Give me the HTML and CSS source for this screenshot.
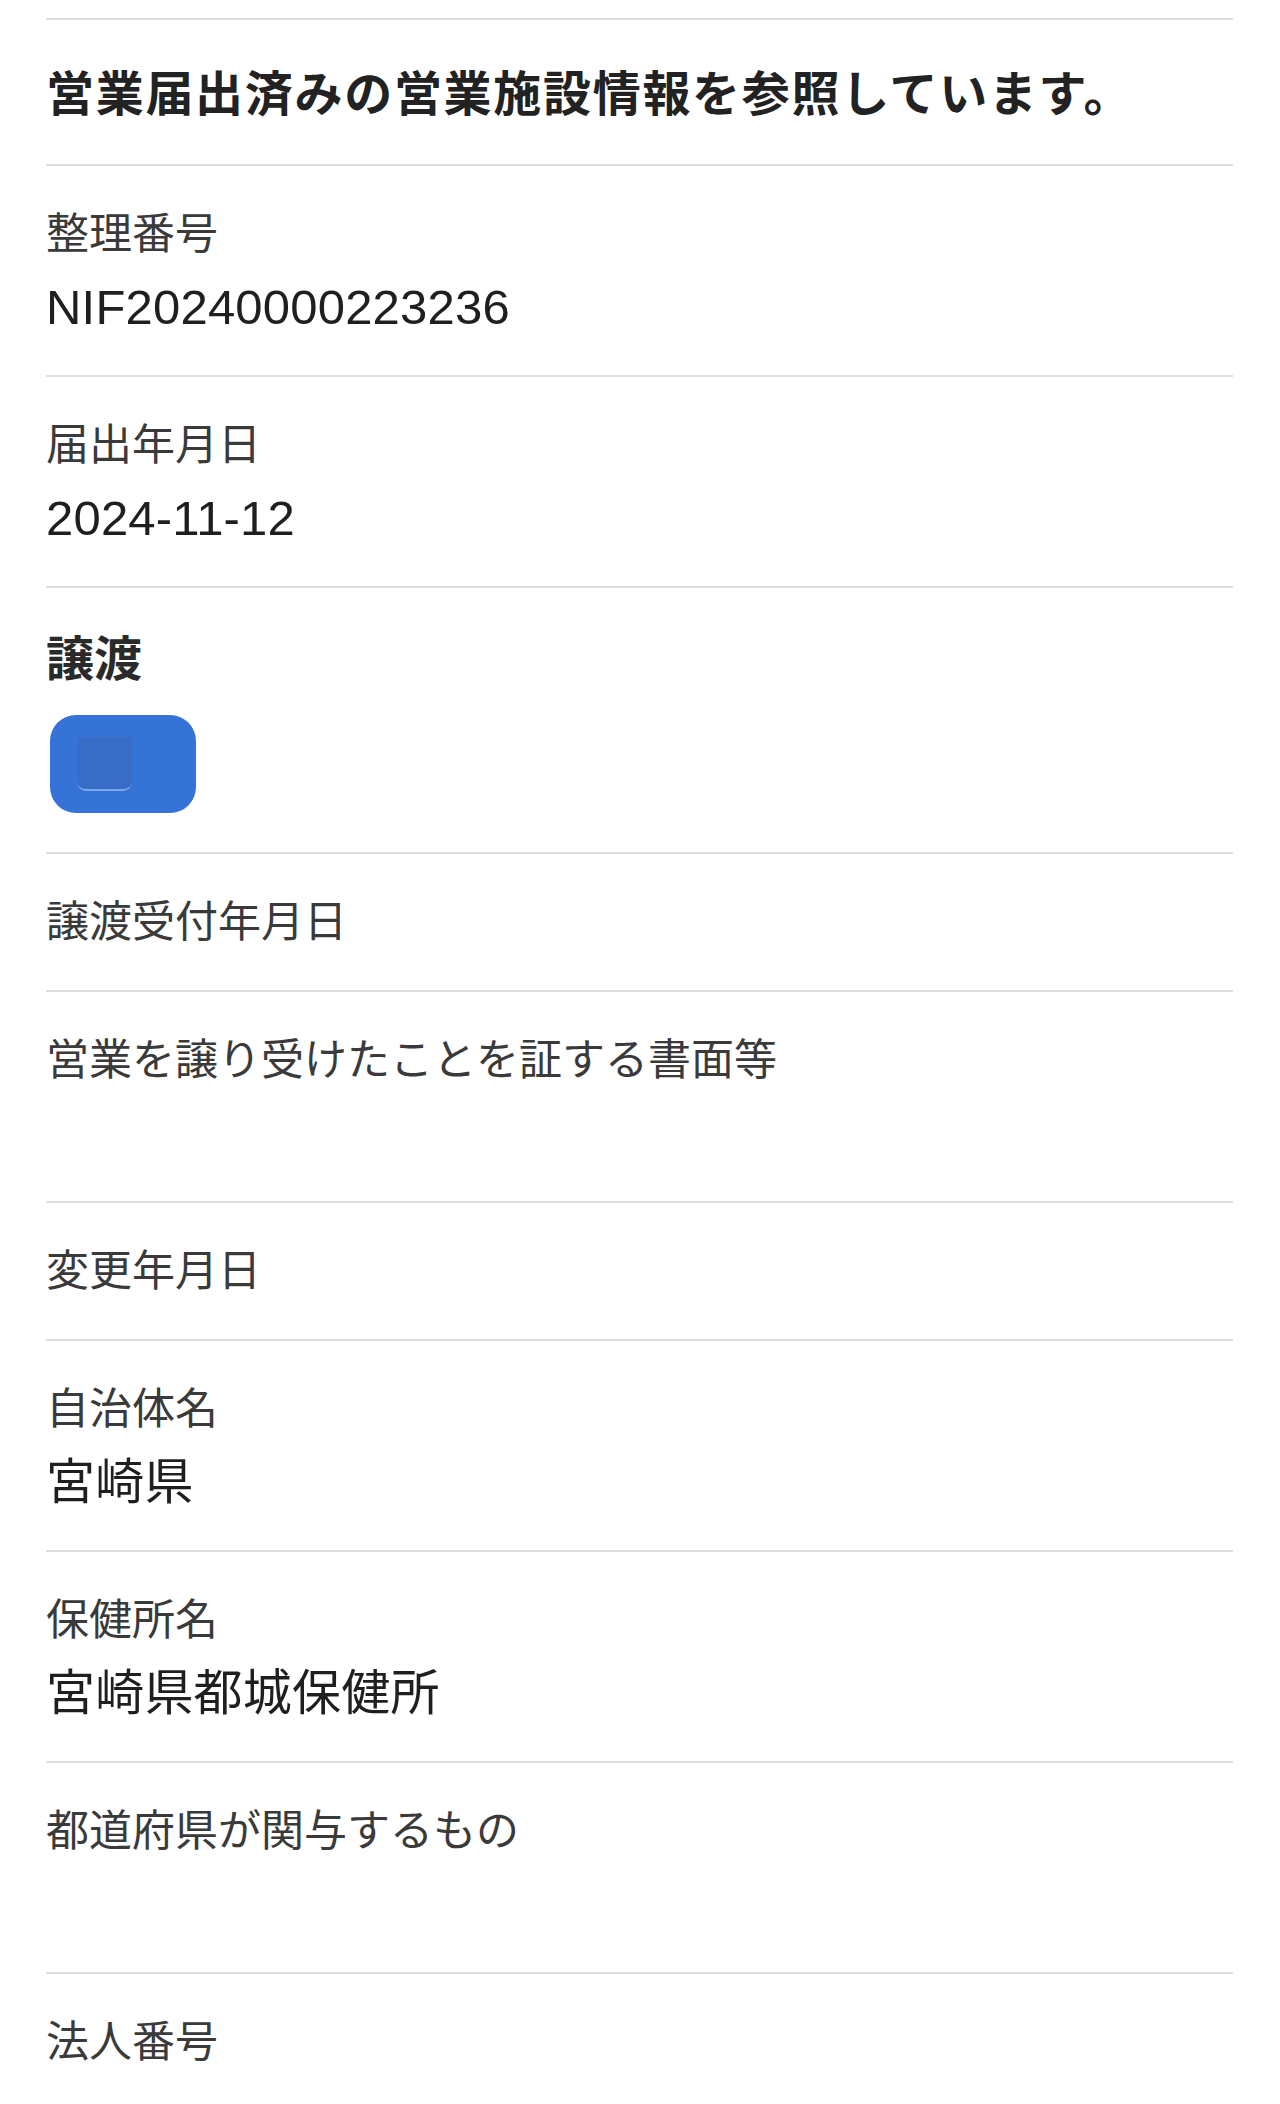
FILE: index.html
```html
<!DOCTYPE html>
<html lang="ja">
<head>
  <meta charset="utf-8">
  <title>営業施設情報</title>
  <link rel="stylesheet" href="styles.css">
</head>
<body>
  <div class="sheet">
    <div class="row row-title">
      <h1>営業届出済みの営業施設情報を参照しています。</h1>
    </div>

    <div class="row">
      <div class="label">整理番号</div>
      <div class="value">NIF20240000223236</div>
    </div>

    <div class="row">
      <div class="label">届出年月日</div>
      <div class="value">2024-11-12</div>
    </div>

    <div class="row row-transfer">
      <h2>譲渡</h2>
      <div class="toggle">
        <span class="knob"></span>
      </div>
    </div>

    <div class="row">
      <div class="label">譲渡受付年月日</div>
    </div>

    <div class="row">
      <div class="label">営業を譲り受けたことを証する書面等</div>
      <div class="value"></div>
    </div>

    <div class="row">
      <div class="label">変更年月日</div>
    </div>

    <div class="row">
      <div class="label">自治体名</div>
      <div class="value">宮崎県</div>
    </div>

    <div class="row">
      <div class="label">保健所名</div>
      <div class="value">宮崎県都城保健所</div>
    </div>

    <div class="row">
      <div class="label">都道府県が関与するもの</div>
      <div class="value"></div>
    </div>

    <div class="row row-last">
      <div class="label">法人番号</div>
    </div>
  </div>
</body>
</html>
```

FILE: styles.css
```css
/* Facility detail sheet */
html, body {
  margin: 0;
  background-color: #ffffff;
}

body {
  font-family: "Liberation Sans", "Noto Sans CJK JP", sans-serif;
  color: #222;
  overflow: hidden;
}

.sheet {
  margin: 0 47px 0 46px;
  padding-top: 18px;
}

.row {
  border-top: 2px solid #dedede;
  padding: 43px 0 43px;
}

.row-title {
  padding: 45px 0 39px;
}

h1 {
  margin: 0;
  font-size: 48px;
  line-height: 60px;
  font-weight: bold;
  letter-spacing: 1.7px;
  color: #222;
}

.label {
  font-size: 43px;
  line-height: 50px;
  color: #3a3a3a;
}

.value {
  margin-top: 23px;
  min-height: 50px;
  font-size: 49px;
  line-height: 50px;
  letter-spacing: 0.2px;
  color: #1f1f1f;
}

.row-transfer {
  padding-bottom: 39px;
}

h2 {
  margin: 0;
  font-size: 48px;
  line-height: 58px;
  font-weight: bold;
  color: #2a2a2a;
}

.toggle {
  margin-top: 26px;
  margin-left: 4px;
  width: 146px;
  height: 98px;
  border-radius: 26px;
  background-color: #3574d6;
  display: flex;
  align-items: center;
  padding-left: 27px;
  box-sizing: border-box;
}

.knob {
  width: 55px;
  height: 54px;
  border-radius: 4px 4px 9px 9px;
  background-color: #396cc7;
  border-bottom: 2px solid #7aa8f0;
  box-sizing: border-box;
}

.row-last {
  padding-bottom: 30px;
}
```
